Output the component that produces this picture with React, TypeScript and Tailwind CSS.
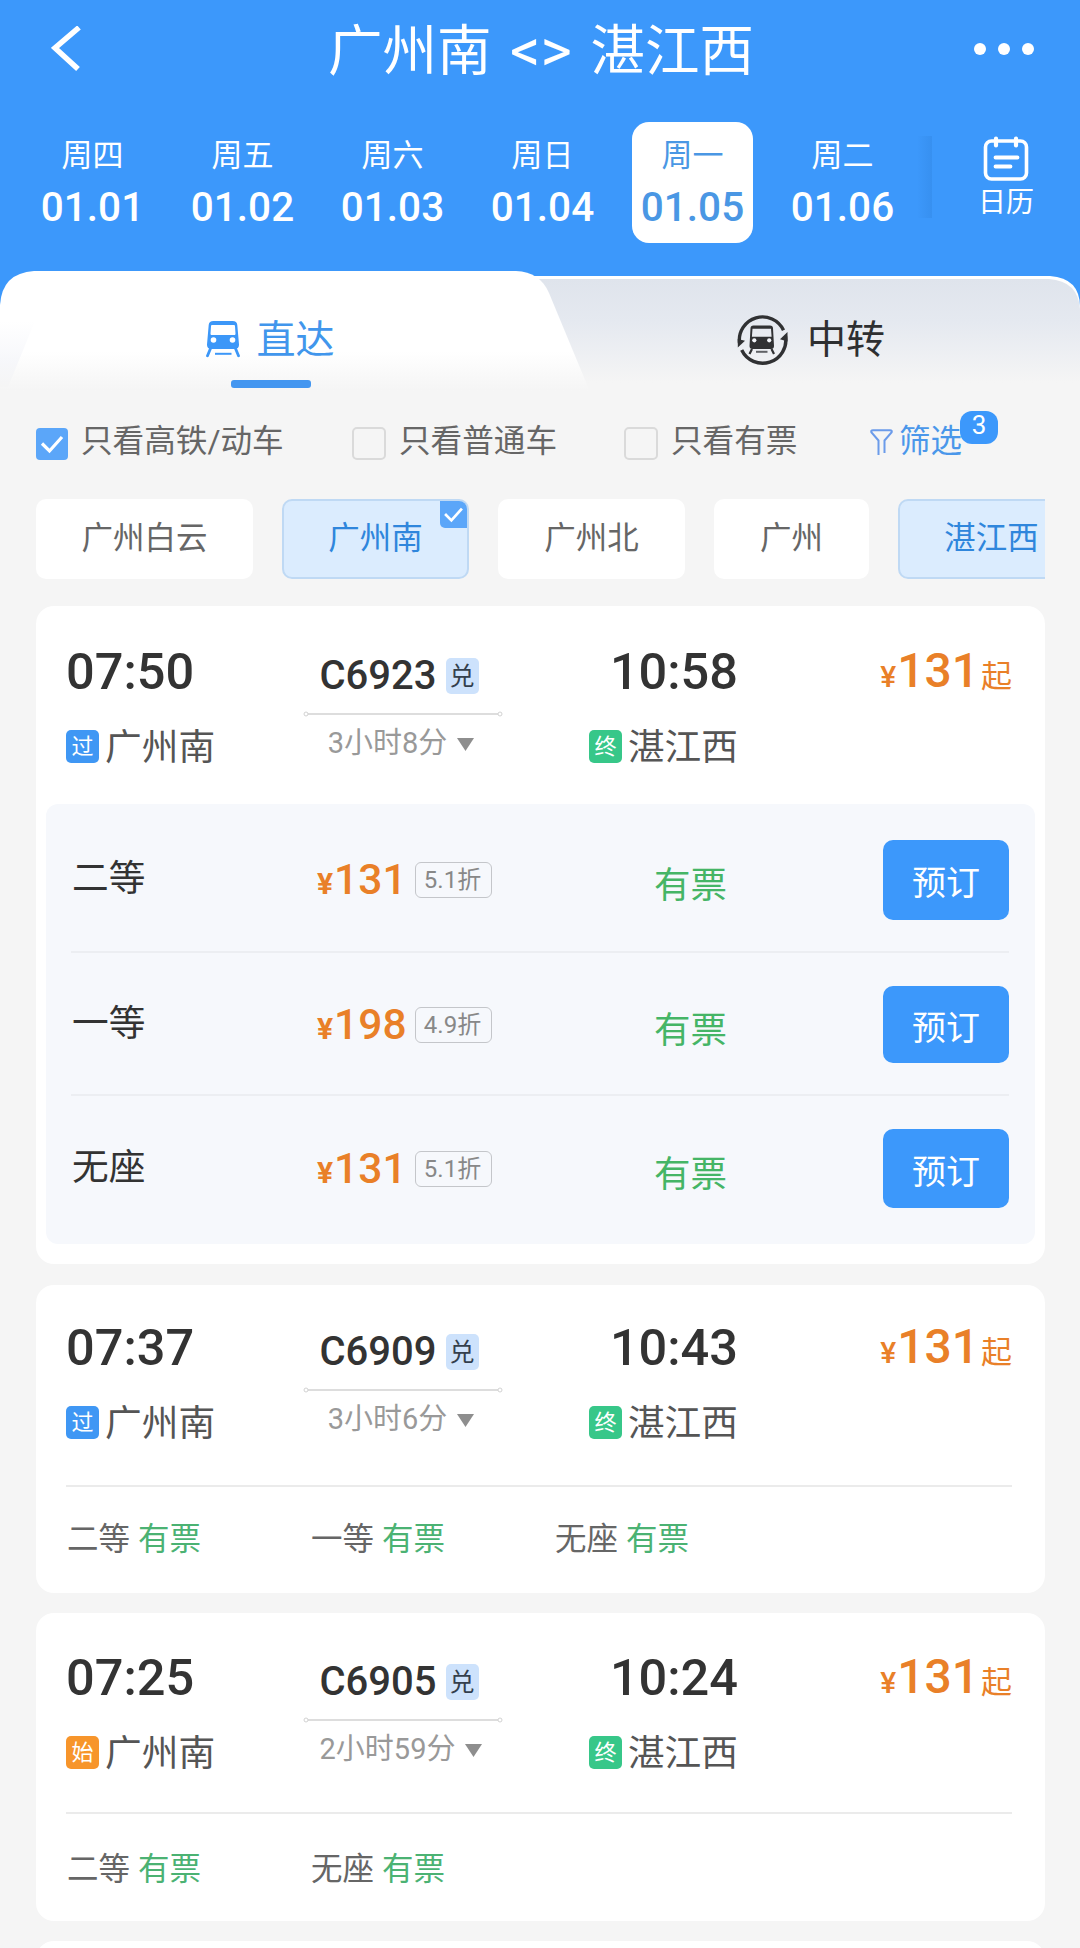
import { useState } from "react";
import clsx from "clsx";

type Seat = { name: string; price: number; discount: string };

type Train = {
  code: string;
  depart: string;
  arrive: string;
  from: string;
  to: string;
  duration: string;
  price: number;
  origin: boolean;
  seats: Seat[];
};

const days = [
  { week: "周四", date: "01.01" },
  { week: "周五", date: "01.02" },
  { week: "周六", date: "01.03" },
  { week: "周日", date: "01.04" },
  { week: "周一", date: "01.05" },
  { week: "周二", date: "01.06" },
];

const stations = [
  { name: "广州白云", width: "w-[217px]" },
  { name: "广州南", width: "w-[187px]", active: true, tick: true },
  { name: "广州北", width: "w-[187px]" },
  { name: "广州", width: "w-[155px]" },
  { name: "湛江西", width: "w-[187px]", active: true },
];

const trains: Train[] = [
  {
    code: "C6923",
    depart: "07:50",
    arrive: "10:58",
    from: "广州南",
    to: "湛江西",
    duration: "3小时8分",
    price: 131,
    origin: false,
    seats: [
      { name: "二等", price: 131, discount: "5.1折" },
      { name: "一等", price: 198, discount: "4.9折" },
      { name: "无座", price: 131, discount: "5.1折" },
    ],
  },
  {
    code: "C6909",
    depart: "07:37",
    arrive: "10:43",
    from: "广州南",
    to: "湛江西",
    duration: "3小时6分",
    price: 131,
    origin: false,
    seats: [
      { name: "二等", price: 131, discount: "5.1折" },
      { name: "一等", price: 198, discount: "4.9折" },
      { name: "无座", price: 131, discount: "5.1折" },
    ],
  },
  {
    code: "C6905",
    depart: "07:25",
    arrive: "10:24",
    from: "广州南",
    to: "湛江西",
    duration: "2小时59分",
    price: 131,
    origin: true,
    seats: [
      { name: "二等", price: 131, discount: "5.1折" },
      { name: "无座", price: 131, discount: "5.1折" },
    ],
  },
];

function TrainIcon() {
  return (
    <svg width="34" height="38" viewBox="0 0 34 38" fill="none">
      <path
        fillRule="evenodd"
        fill="#3c97f8"
        d="M7.500 0h19c3 0 4.600 1.300 4.800 4L33 23.500c.2 2.700-1.300 4.500-4.300 4.500H5.300C2.300 28 .8 26.200 1 23.500L2.700 4C2.900 1.300 4.500 0 7.500 0ZM6.300 4c-.8 0-1.300.5-1.300 1.300L4.500 12.700c0 .8.500 1.300 1.300 1.300h22.400c.8 0 1.300-.5 1.300-1.300L29 5.300c0-.8-.5-1.300-1.300-1.300H6.300Z"
      />
      <circle cx="7.500" cy="19" r="2.800" fill="#fff" />
      <circle cx="26.500" cy="19" r="2.800" fill="#fff" />
      <path d="M4.500 27.500 1.500 34.800M29.500 27.500l3 7.300" stroke="#3c97f8" strokeWidth="2.800" strokeLinecap="round" />
      <path d="M9 32.800h16.500" stroke="#3c97f8" strokeWidth="2" />
    </svg>
  );
}

function TransferIcon() {
  return (
    <svg width="52" height="52" viewBox="0 0 52 52" fill="none">
      <path d="M2.500 29A23.200 23.200 0 0 1 46.500 16.200" stroke="#303133" strokeWidth="3.400" />
      <path d="M48.500 22A23.200 23.200 0 0 1 4.700 36" stroke="#303133" strokeWidth="3.400" />
      <path d="M.8 33.500V25l7.200 1.800Z" fill="#303133" />
      <path d="M50.500 18v9.500l-7.500-2.200Z" fill="#303133" />
      <path
        fillRule="evenodd"
        fill="#303133"
        d="M16.500 11.500h16.500c2 0 2.900.9 3 2.800L37 32c0 2-1 3-3 3H15.500c-2 0-3-1-3-3l1-17.700c.1-1.900 1-2.800 3-2.800Zm-1 3.300-.6 8h19.700l-.6-8H15.500Z"
      />
      <circle cx="17.300" cy="26.300" r="2.100" fill="#f4f6fa" />
      <circle cx="32.200" cy="26.300" r="2.100" fill="#f4f6fa" />
      <path d="M15 35l-2.500 5M34.500 35l2.500 5" stroke="#303133" strokeWidth="2.200" />
      <path d="M19 37.800h11.500" stroke="#606266" strokeWidth="2" />
    </svg>
  );
}

function Tick({ className }: { className?: string }) {
  return (
    <svg className={className} viewBox="0 0 32 32" fill="none">
      <path d="m6 15.500 7.500 7.500L26 9" stroke="#fff" strokeWidth="3.200" />
    </svg>
  );
}

function Header() {
  const [selected, setSelected] = useState(4);

  return (
    <header className="h-[271px] bg-[#3c98fb] text-white">
      <div className="flex h-[98px] items-center justify-between pr-[46px] pl-[51px]">
        <svg width="32" height="46" viewBox="0 0 32 46" fill="none">
          <path d="M28 1.500 4 22l23 21" stroke="#fff" strokeWidth="5.500" />
        </svg>
        <h1 className="flex items-center gap-[18.500px] pt-[4px] pl-[25px] text-[54.500px] leading-[70px] font-normal">
          <span>广州南</span>
          <span className="text-[60px]">&lt;&gt;</span>
          <span>湛江西</span>
        </h1>
        <div className="flex gap-3">
          <span className="size-3 rounded-full bg-white" />
          <span className="size-3 rounded-full bg-white" />
          <span className="size-3 rounded-full bg-white" />
        </div>
      </div>

      <div className="flex pt-6 pl-[17px]">
        {days.map((day, i) => (
          <div key={day.date} className="flex w-[150px] justify-center">
            <button
              type="button"
              onClick={() => setSelected(i)}
              className={clsx(
                "flex h-[121px] w-[121px] flex-col items-center rounded-[17px] pt-[14px] pl-px",
                i === selected && "bg-white text-[#4a97e4]"
              )}
            >
              <span className="text-[31px] leading-[40px]">{day.week}</span>
              <span className="mt-[7px] text-[40.500px] leading-[48px] font-medium">{day.date}</span>
            </button>
          </div>
        ))}
        <div className="mt-[14px] h-[82px] w-[15px] bg-gradient-to-r from-[#3c98fb] to-[#3790f0]" />
        <div className="flex flex-1 flex-col items-center pt-[14px]">
          <svg width="46" height="46" viewBox="0 0 46 46" fill="none" stroke="#fff" strokeLinecap="round">
            <rect x="2.500" y="5" width="41" height="38" rx="6" strokeWidth="3.600" />
            <path d="M13 2.500v7M33 2.500v7" strokeWidth="4.200" />
            <path d="M12.500 21.500h22M12.500 30.500h15" strokeWidth="3.800" />
          </svg>
          <span className="mt-[3px] text-[28px] leading-[36px]">日历</span>
        </div>
      </div>
    </header>
  );
}

function Tabs() {
  return (
    <div className="relative h-[130px] bg-[#3c98fb]">
      {/* slanted tab background */}
      <svg className="absolute inset-0" width="1080" height="130" viewBox="0 0 1080 130">
        <defs>
          <linearGradient id="idle" x1="0" y1="0" x2="0" y2="1">
            <stop offset="0" stopColor="#dfe4ec" />
            <stop offset=".35" stopColor="#e5e9f0" />
            <stop offset=".85" stopColor="#f5f5f5" />
            <stop offset="1" stopColor="#f5f5f5" />
          </linearGradient>
          <linearGradient id="active" x1="0" y1="0" x2="0" y2="1">
            <stop offset="0" stopColor="#fff" />
            <stop offset=".62" stopColor="#fff" />
            <stop offset=".92" stopColor="#f5f5f5" />
            <stop offset="1" stopColor="#f5f5f5" />
          </linearGradient>
          <linearGradient id="edge" x1="0" y1="0" x2="0" y2="1">
            <stop offset="0" stopColor="#f5f6fa" stopOpacity="0" />
            <stop offset=".6" stopColor="#f5f6fa" stopOpacity=".8" />
            <stop offset="1" stopColor="#f5f5f5" />
          </linearGradient>
        </defs>
        <path d="M500 5H1050Q1080 7 1080 36V130H500Z" fill="#fff" />
        <path d="M500 8H1049Q1078 10 1080 38V130H500Z" fill="url(#idle)" />
        <path d="M0 130V34Q2 2 34 0H516Q540 1 549 22L588 116V130Z" fill="url(#active)" />
        <path d="M0 50 35 50 8 116H0Z" fill="url(#edge)" />
      </svg>
      <div className="relative flex">
        <div className="flex w-[542px] flex-col items-center">
          <div className="flex h-[109px] items-center gap-[16px] pr-px pt-[28px]">
            <TrainIcon />
            <span className="text-[39px] leading-[48px] text-[#4196ec]">直达</span>
          </div>
          <span className="h-2 w-20 rounded-[3px] bg-[#4396f0]" />
        </div>
        <div className="flex h-[109px] flex-1 items-center justify-center gap-[18px] pt-[28px]">
          <TransferIcon />
          <span className="text-[39px] leading-[48px] text-[#2e2f31]">中转</span>
        </div>
      </div>
    </div>
  );
}

function Check({ label, checked, className }: { label: string; checked?: boolean; className?: string }) {
  return (
    <label className={clsx("flex items-center", className)}>
      {checked ? (
        <span className="mt-[3px] size-8 rounded-[4px] bg-[#5ba6f9]">
          <Tick className="size-8" />
        </span>
      ) : (
        <span className="mt-[3px] h-[33px] w-[34px] rounded-[5px] border-2 border-[#dadada]" />
      )}
      <span className="ml-[13px] text-[31.600px] leading-[40px] text-[#666]">{label}</span>
    </label>
  );
}

function Filters() {
  return (
    <>
      <div className="flex h-[74px] items-center pt-2 pl-9">
        <Check label="只看高铁/动车" checked className="w-[316px]" />
        <Check label="只看普通车" className="w-[272px]" />
        <Check label="只看有票" className="w-[246px]" />
        <div className="relative flex items-center">
          <svg className="mt-px" width="23" height="27" viewBox="0 0 23 27" fill="none">
            <path
              d="M8.500 26V11.500L1.500 3.500Q.5 1.300 3 1.300H20Q22.500 1.300 21.500 3.500L14.500 11.500V24"
              stroke="#6b9bea"
              strokeWidth="2"
            />
          </svg>
          <span className="ml-[6px] text-[31.500px] leading-[40px] text-[#4a97ea]">筛选</span>
          <span className="absolute -top-[11px] left-[90px] flex h-[33px] w-[38px] items-center justify-center rounded-[12px] bg-[#3c98fb] pb-1.5 text-[26px] leading-none text-white">
            3
          </span>
        </div>
      </div>

      <div className="mr-[35px] ml-9 flex gap-[29px] overflow-hidden pt-6">
        {stations.map((s) => (
          <button
            key={s.name}
            type="button"
            className={clsx(
              "relative flex h-20 shrink-0 items-center justify-center rounded-[10px] text-[31.500px]",
              s.width,
              s.active ? "border-2 border-[#bfd9f4] bg-[#dbecfe] text-[#2f86dc]" : "bg-white text-[#666]"
            )}
          >
            {s.name}
            {s.tick && (
              <span className="absolute top-0 right-0 size-[27px] rounded-tr-[8px] rounded-bl-[5px] bg-[#5ba6f9]">
                <Tick className="size-[27px]" />
              </span>
            )}
          </button>
        ))}
      </div>
    </>
  );
}

function StationLabel({ tag, tagClass, name }: { tag: string; tagClass: string; name: string }) {
  return (
    <div className="flex items-center gap-[6px]">
      <span className={clsx("flex h-[33px] w-[33px] items-center justify-center rounded-[5px] text-[22px] leading-none text-white", tagClass)}>
        {tag}
      </span>
      <span className="pt-[3px] text-[36.700px] leading-[42px] text-[#555]">{name}</span>
    </div>
  );
}

function TrainSummary({ train }: { train: Train }) {
  return (
    <div className="flex pl-[30px]">
      <div className="w-[237px]">
        <div className="pt-px text-[50.500px] leading-[60px] font-medium text-[#333]">{train.depart}</div>
        <div className="mt-[22px]">
          <StationLabel
            tag={train.origin ? "始" : "过"}
            tagClass={train.origin ? "bg-[#f7952b]" : "bg-[#3f97f4]"}
            name={train.from}
          />
        </div>
      </div>

      <div className="flex w-[200px] flex-col items-center">
        <div className="flex items-center gap-[9px] pt-[11px] pr-[8px]">
          <span className="text-[40px] leading-[48px] font-medium text-[#333]">{train.code}</span>
          <span className="flex h-9 w-[33px] items-center justify-center rounded-[5px] bg-[#cde2fc] text-[25px] leading-none text-[#333f4d]">
            兑
          </span>
        </div>
        <svg className="mt-[11px]" width="200" height="6" viewBox="0 0 200 6" fill="none" stroke="#d2d2d2">
          <circle cx="3" cy="3" r="2" />
          <path d="M5 3h190" strokeWidth="1.500" />
          <circle cx="197" cy="3" r="2" />
        </svg>
        <div className="mt-[6px] flex items-center gap-[10px] pr-[4px] text-[29px] leading-[40px] text-[#999]">
          {train.duration}
          <svg className="mt-[3px]" width="17" height="13" viewBox="0 0 17 13">
            <path d="M0 0h17L8.500 13Z" fill="#8e8e8e" />
          </svg>
        </div>
      </div>

      <div className="flex w-[235px] flex-col items-end">
        <div className="pt-px text-[50.500px] leading-[60px] font-medium text-[#333]">{train.arrive}</div>
        <div className="mt-[22px]">
          <StationLabel tag="终" tagClass="bg-[#37c789]" name={train.to} />
        </div>
      </div>

      <div className="flex h-[60px] flex-1 items-baseline justify-end pt-px pr-[33px] text-[#e98028]">
        <span className="mr-px text-[30px] font-medium">¥</span>
        <span className="text-[48px] leading-[58px] font-medium">{train.price}</span>
        <span className="pl-[2px] text-[31px]">起</span>
      </div>
    </div>
  );
}

const rowClasses = ["h-[149px] pt-[4px]", "h-[143px] pt-[2px]", "h-[148px] pb-[3px]"];
const buttonHeights = ["h-20", "h-[77px]", "h-[79px]"];

function SeatTable({ seats }: { seats: Seat[] }) {
  return (
    <div className="mx-[10px] rounded-[12px] bg-[#f6f8fc] pr-[26px] pl-[25px]">
      {seats.map((seat, i) => (
        <div
          key={seat.name}
          className={clsx("flex items-center", rowClasses[i], i < seats.length - 1 && "border-b-2 border-[#eceef2]")}
        >
          <span className="w-[245px] pb-[2px] pl-px text-[36.700px] leading-[44px] text-[#333]">{seat.name}</span>
          <div className="flex w-[338px] items-center pl-px">
            <span className="w-[98px] pt-[9px] leading-[48px] font-medium text-[#e98028]">
              <span className="mr-px text-[30px] font-bold">¥</span>
              <span className="text-[42.500px]">{seat.price}</span>
            </span>
            <span className="flex h-9 w-[77px] items-center justify-center rounded-[6px] border border-[#c4c6ca] pr-[2px] text-[24px] leading-none text-[#888]">
              {seat.discount}
            </span>
          </div>
          <span className="pt-[12px] text-[36.500px] leading-[44px] text-[#45b566]">有票</span>
          <button
            type="button"
            className={clsx("ml-auto w-[126px] rounded-[10px] bg-[#3c98fb] pt-2 text-[34px] text-white", buttonHeights[i])}
          >
            预订
          </button>
        </div>
      ))}
    </div>
  );
}

function SeatLine({ seats, className }: { seats: Seat[]; className?: string }) {
  return (
    <div
      className={clsx("mr-[33px] ml-[30px] flex border-t-2 border-[#ebebeb] pl-px text-[31.500px] leading-[40px] text-[#666]", className)}
    >
      {seats.map((seat) => (
        <div key={seat.name} className="flex w-[244px] gap-2">
          <span>{seat.name}</span>
          <span className="text-[#4bb273]">有票</span>
        </div>
      ))}
    </div>
  );
}

export default function App() {
  const [open] = useState("C6923");

  return (
    <div className="h-[1948px] w-[1080px] overflow-hidden bg-[#f5f5f5] font-['Roboto','Noto_Sans_CJK_SC',sans-serif]">
      <Header />
      <Tabs />
      <Filters />

      <main className="mr-[35px] ml-9 pt-[27px]">
        {trains.map((train, i) =>
          train.code === open ? (
            <section key={train.code} className="mb-[21px] h-[658px] rounded-[18px] bg-white pt-[35px]">
              <div className="h-[163px]">
                <TrainSummary train={train} />
              </div>
              <SeatTable seats={train.seats} />
            </section>
          ) : (
            <section key={train.code} className={clsx("mb-5 h-[308px] rounded-[18px] bg-white", i === 1 ? "pt-8" : "pt-[34px]")}>
              <div className={i === 1 ? "h-[168px]" : "h-[165px]"}>
                <TrainSummary train={train} />
              </div>
              <SeatLine seats={train.seats} className={i === 1 ? "pt-[33px]" : "pt-9"} />
            </section>
          )
        )}
        <section className="h-[300px] rounded-[18px] bg-white" />
      </main>
    </div>
  );
}
